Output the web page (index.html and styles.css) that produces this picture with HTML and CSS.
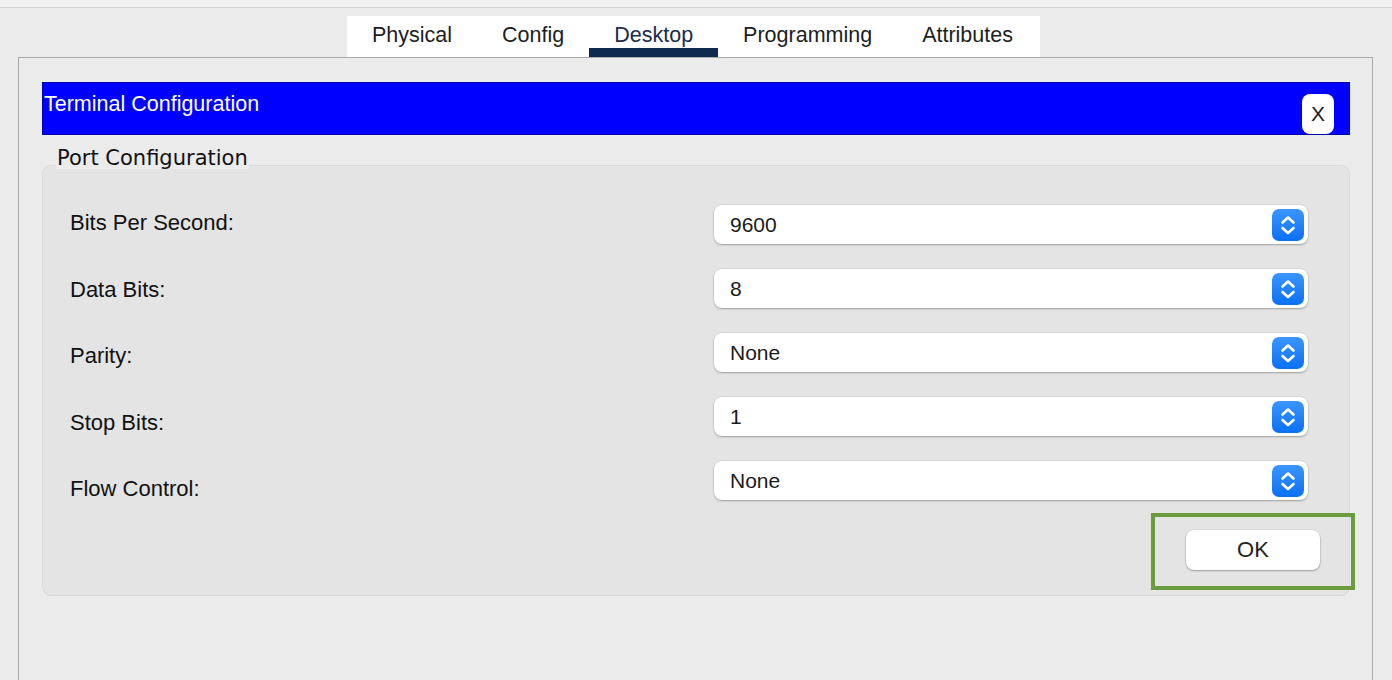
FILE: index.html
```html
<!DOCTYPE html>
<html>
<head>
<meta charset="utf-8">
<link rel="stylesheet" href="styles.css">
</head>
<body>
<div class="topstrip"></div>
<nav class="tabs">
  <div class="tab">Physical</div>
  <div class="tab">Config</div>
  <div class="tab active">Desktop</div>
  <div class="tab">Programming</div>
  <div class="tab">Attributes</div>
</nav>
<main class="panel">
  <div class="titlebar">
    <div class="title">Terminal Configuration</div>
    <button class="close">X</button>
  </div>
  <div class="group-title">Port Configuration</div>
  <section class="group">
    <div class="form">
      <div class="labels">
        <div class="label">Bits Per Second:</div>
        <div class="label">Data Bits:</div>
        <div class="label">Parity:</div>
        <div class="label">Stop Bits:</div>
        <div class="label">Flow Control:</div>
      </div>
      <div class="fields">
        <div class="select"><span class="value">9600</span><span class="stepper"><svg viewBox="0 0 32 32" width="32" height="32"><path d="M10.5 13.5 L16 8.5 L21.5 13.5 M10.5 19 L16 24 L21.5 19" fill="none" stroke="#fff" stroke-width="2.6" stroke-linecap="round" stroke-linejoin="round"/></svg></span></div>
        <div class="select"><span class="value">8</span><span class="stepper"><svg viewBox="0 0 32 32" width="32" height="32"><path d="M10.5 13.5 L16 8.5 L21.5 13.5 M10.5 19 L16 24 L21.5 19" fill="none" stroke="#fff" stroke-width="2.6" stroke-linecap="round" stroke-linejoin="round"/></svg></span></div>
        <div class="select"><span class="value">None</span><span class="stepper"><svg viewBox="0 0 32 32" width="32" height="32"><path d="M10.5 13.5 L16 8.5 L21.5 13.5 M10.5 19 L16 24 L21.5 19" fill="none" stroke="#fff" stroke-width="2.6" stroke-linecap="round" stroke-linejoin="round"/></svg></span></div>
        <div class="select"><span class="value">1</span><span class="stepper"><svg viewBox="0 0 32 32" width="32" height="32"><path d="M10.5 13.5 L16 8.5 L21.5 13.5 M10.5 19 L16 24 L21.5 19" fill="none" stroke="#fff" stroke-width="2.6" stroke-linecap="round" stroke-linejoin="round"/></svg></span></div>
        <div class="select"><span class="value">None</span><span class="stepper"><svg viewBox="0 0 32 32" width="32" height="32"><path d="M10.5 13.5 L16 8.5 L21.5 13.5 M10.5 19 L16 24 L21.5 19" fill="none" stroke="#fff" stroke-width="2.6" stroke-linecap="round" stroke-linejoin="round"/></svg></span></div>
      </div>
    </div>
    <div class="actions">
      <div class="ok-wrap"><button class="ok">OK</button></div>
    </div>
  </section>
</main>
</body>
</html>
```

FILE: styles.css
```css
*, *::before, *::after { box-sizing: border-box; }
html, body { margin: 0; padding: 0; }
body {
  width: 1392px;
  height: 680px;
  overflow: hidden;
  background: #ebebeb;
  font-family: "Liberation Sans", Arial, sans-serif;
  color: #1c1c1c;
}
.topstrip {
  height: 8px;
  background: #f0f0f0;
  border-bottom: 1px solid #d2d2d2;
}
.tabs {
  display: flex;
  margin: 8px 0 0 347px;
  width: 693px;
  height: 41px;
  background: #ffffff;
}
.tab {
  padding: 7px 25px 0;
  font-size: 21.5px;
  line-height: 25px;
  color: #1e1e1e;
  height: 41px;
}
.tab.active {
  color: #1b2b4b;
  box-shadow: inset 0 -9px 0 #0f2a4f;
}
.panel {
  margin: 0 19px 0 18px;
  height: 640px;
  border: 1px solid #aaaaaa;
  border-bottom: none;
  padding: 24px 22px 0 23px;
}
.titlebar {
  display: flex;
  justify-content: space-between;
  align-items: flex-end;
  height: 53px;
  background: #0000ff;
  border: 1px solid #0000a6;
}
.title {
  align-self: flex-start;
  padding: 9px 0 0 1px;
  font-size: 21.5px;
  line-height: 24px;
  color: #ffffff;
}
.close {
  width: 32px;
  height: 40px;
  margin-right: 15px;
  border: none;
  border-radius: 8px;
  background: #ffffff;
  font-family: "Liberation Sans", Arial, sans-serif;
  font-size: 21px;
  color: #222222;
  padding: 0;
}
.group-title {
  display: inline-block;
  position: relative;
  z-index: 1;
  margin: 12px 0 0 14px;
  padding: 0 1px;
  height: 22px;
  background: #ebebeb;
  font-family: "DejaVu Sans", sans-serif;
  font-size: 21px;
  line-height: 22px;
  color: #111111;
}
.group {
  margin-top: -4px;
  background: #e4e4e4;
  border: 1px solid #d9d9d9;
  border-radius: 9px;
  padding: 0 0 25px 0;
}
.form {
  display: flex;
  justify-content: space-between;
}
.labels {
  padding: 24px 0 0 27px;
}
.label {
  height: 66.5px;
  line-height: 66.5px;
  font-size: 22px;
  color: #111111;
}
.fields {
  display: flex;
  flex-direction: column;
  gap: 25px;
  padding-top: 39px;
  margin-right: 41px;
}
.select {
  width: 594px;
  height: 39px;
  display: flex;
  align-items: center;
  justify-content: space-between;
  background: #ffffff;
  border-radius: 8px;
  box-shadow: 0 1px 2px rgba(0,0,0,0.28), 0 0 0 0.5px rgba(0,0,0,0.08);
  padding: 0 4px 0 16px;
}
.value {
  font-size: 21px;
  color: #1a1a1a;
}
.stepper {
  width: 32px;
  height: 32px;
  border-radius: 7px;
  background: linear-gradient(#3b96ff, #0a70f4);
  display: flex;
}
.stepper svg { display: block; }
.actions {
  display: flex;
  justify-content: flex-end;
  margin-top: 7.5px;
  padding-right: 29px;
}
.ok-wrap {
  position: relative;
}
.ok-wrap::after {
  content: "";
  position: absolute;
  left: -35px;
  top: -17px;
  width: 204px;
  height: 77px;
  border: 4px solid #6a9c3e;
  pointer-events: none;
}
.ok {
  display: block;
  width: 134px;
  height: 40px;
  border: none;
  border-radius: 8px;
  background: #ffffff;
  box-shadow: 0 1px 2px rgba(0,0,0,0.3), 0 0 0 0.5px rgba(0,0,0,0.08);
  font-family: "Liberation Sans", Arial, sans-serif;
  font-size: 22px;
  color: #222222;
  padding: 0;
}
```
